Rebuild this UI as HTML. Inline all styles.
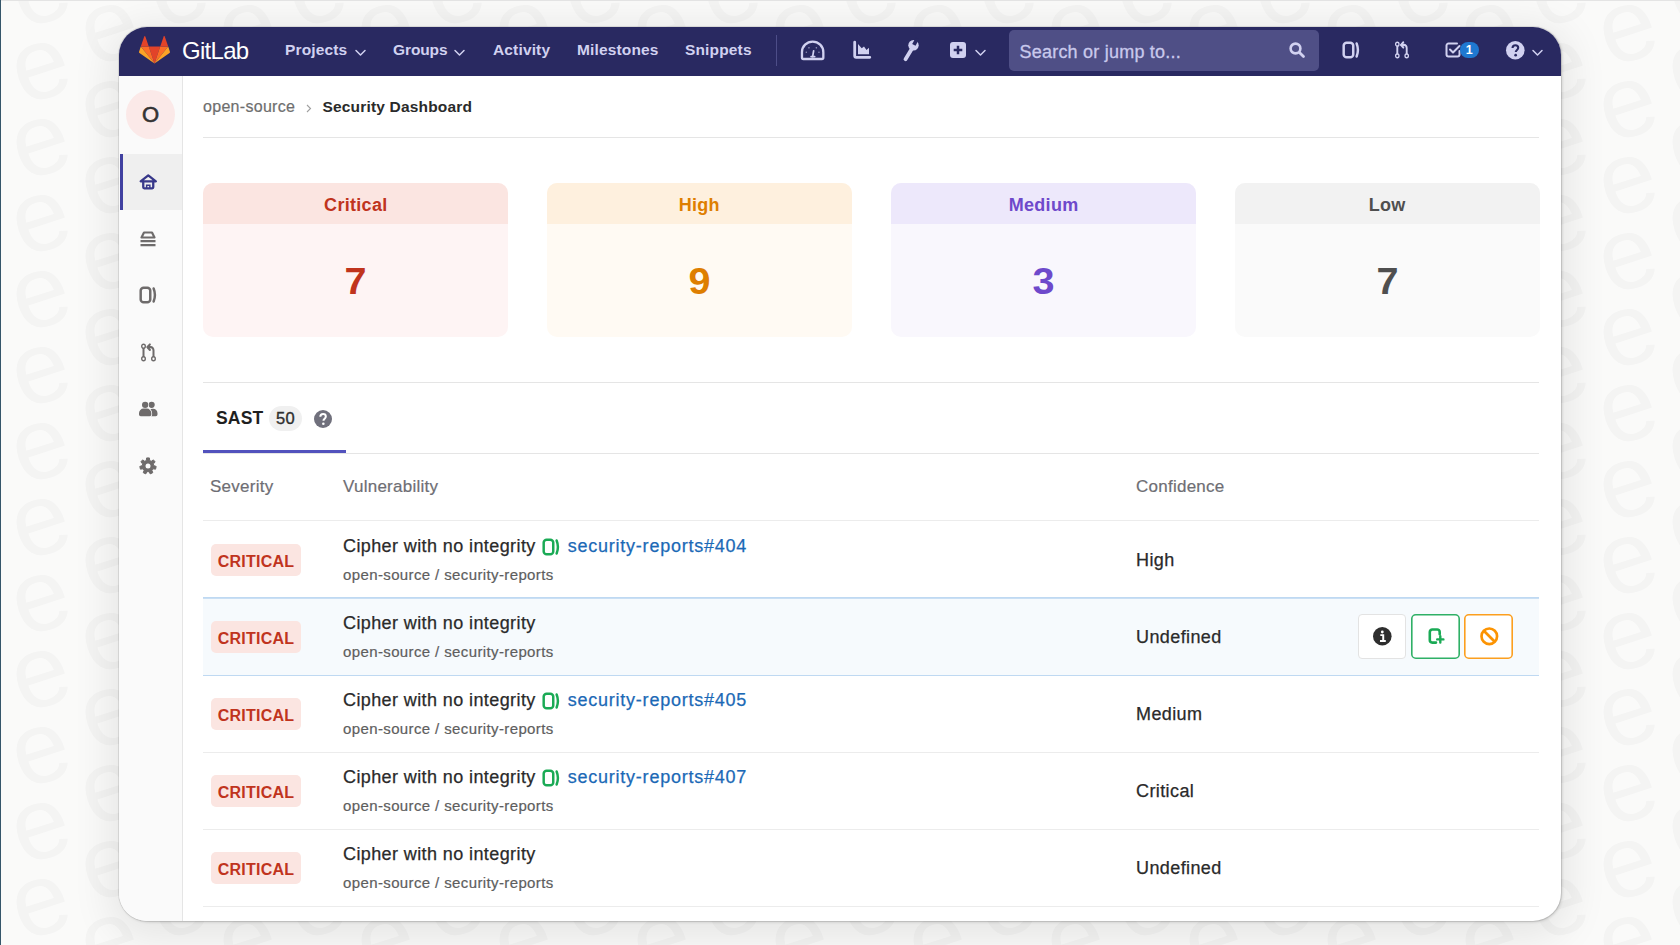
<!DOCTYPE html>
<html>
<head>
<meta charset="utf-8">
<style>
*{box-sizing:border-box;margin:0;padding:0}
html,body{width:1680px;height:945px;overflow:hidden}
body{font-family:"Liberation Sans",sans-serif;background:#fafaf9;position:relative;color:#2e2e2e}
svg{display:block;overflow:visible}
#bgpat{position:absolute;left:0;top:0;width:1680px;height:945px}
#edgeL{position:absolute;left:0;top:0;width:1px;height:945px;background:#35566a}
#edgeT{position:absolute;left:0;top:0;width:1680px;height:1px;background:#e4e4e4}
#win{position:absolute;left:119px;top:27px;width:1442px;height:894px;border-radius:28px;background:#fff;overflow:hidden;box-shadow:0 0 0 1px rgba(0,0,0,.08),1px 1px 3px rgba(0,0,0,.17),0 8px 40px 8px rgba(0,0,0,.085)}
#nav{position:absolute;left:0;top:0;width:1442px;height:49px;background:#292961}
#nav .t{position:absolute;color:#d1d1f0;font-weight:bold;font-size:15.500px;line-height:20px;top:13px;white-space:nowrap;letter-spacing:.150px}
#brand{position:absolute;left:63px;top:9px;font-size:24px;line-height:30px;color:#fff;letter-spacing:-.700px;white-space:nowrap}
#search{position:absolute;left:890px;top:3px;width:310px;height:41px;border-radius:5px;background:#4f4f86;color:#c9c9ec;font-size:18px;line-height:44px;padding-left:10.500px;white-space:nowrap;letter-spacing:.220px;-webkit-text-stroke:.300px #c9c9ec;overflow:hidden}
#tbadge{position:absolute;left:1341px;top:15px;width:18.500px;height:16px;border-radius:8px;background:#1f78d1;color:#fff;font-weight:bold;font-size:12.500px;line-height:16px;text-align:center}
#side{position:absolute;left:0;top:49px;width:64px;height:845px;background:#fafafa;border-right:1px solid #e5e5e5}
#avatar{position:absolute;left:7px;top:14px;width:49px;height:49px;border-radius:50%;background:#fbe9e8;text-align:center;font-size:22px;line-height:50px;color:#333;-webkit-text-stroke:.600px #333}
#active{position:absolute;left:1px;top:78px;width:62px;height:56px;background:#efefef;border-left:3px solid #4040a0}
#main{position:absolute;left:84px;top:49px;width:1336px;height:845px}
.hr{position:absolute;left:0;width:1336px;height:1px;background:#e5e5e5}
#bc{position:absolute;left:0;top:21px;font-size:15.500px;line-height:20px;white-space:nowrap}
#bc .g{position:absolute;left:0;top:0;color:#6e6e6e;font-size:16px;letter-spacing:.300px;-webkit-text-stroke:.200px #6e6e6e}
#bc b{position:absolute;left:119.500px;top:0;letter-spacing:.180px;color:#2a2a2a}
.card{position:absolute;top:107.200px;width:305px;height:153.400px;border-radius:10px;overflow:hidden}
.card .h{height:41px;text-align:center;font-weight:bold;font-size:18px;line-height:44px;letter-spacing:.300px}
.card .n{text-align:center;font-weight:bold;font-size:36px;line-height:40px;margin-top:38px;transform:scaleX(1.1)}
.row{position:absolute;left:0;width:1336px;height:78px;border-bottom:1px solid #ececec}
.row.hl{background:#f6fafd;border-bottom:1px solid #bfd9f2;box-shadow:0 -1px 0 #bfd9f2,inset 0 1px 0 #c9dff4}
.badge{position:absolute;left:8px;top:22.500px;width:90px;height:32px;border-radius:5px;background:#fbe5e1;color:#c0341d;font-weight:bold;font-size:16px;line-height:35px;text-align:center;letter-spacing:.200px}
.vt{position:absolute;left:140px;top:14px;font-size:18px;line-height:22px;white-space:nowrap;color:#2a2a2a;letter-spacing:.400px;-webkit-text-stroke:.250px #2a2a2a}
.vs{position:absolute;left:140px;top:45px;font-size:15px;line-height:18px;white-space:nowrap;color:#5e5e5e;letter-spacing:.380px;-webkit-text-stroke:.200px #5e5e5e}
.cf{position:absolute;left:933px;top:27.700px;font-size:18px;line-height:22px;color:#2a2a2a;white-space:nowrap;letter-spacing:.400px;-webkit-text-stroke:.250px #2a2a2a}
.lnk{color:#1b69b6;letter-spacing:.770px;-webkit-text-stroke:.250px #1b69b6}
.btn{position:absolute;top:16px;width:48px;height:45px;border:1px solid;border-radius:4px;background:#fff}
#tabu{position:absolute;left:0;top:374px;width:143px;height:3px;background:#5252bd}
#tab{position:absolute;left:13px;top:331px;font-size:17.500px;line-height:22px;color:#1f1f1f;white-space:nowrap;letter-spacing:.200px}
#cnt{position:absolute;left:66px;top:330px;width:33px;height:25px;border-radius:13px;background:#f0f0f0;font-size:16.500px;line-height:25px;text-align:center;color:#2e2e2e;letter-spacing:.300px;-webkit-text-stroke:.350px #2e2e2e}
.th{position:absolute;top:400px;font-size:17px;line-height:22px;color:#6e6e74;white-space:nowrap;letter-spacing:.250px;-webkit-text-stroke:.200px #6e6e74}
.ii{display:inline-block;vertical-align:-3.500px;margin:0 7.200px 0 6.800px}
</style>
</head>
<body>
<svg id="bgpat" width="1680" height="945"><defs><pattern id="pe" width="138" height="152" patternUnits="userSpaceOnUse" patternTransform="translate(-8 -46)"><g fill="#f4f4f3" font-family="Liberation Sans" font-size="102"><text x="21" y="68" transform="rotate(-18 50 40)">e</text><text x="21" y="144" transform="rotate(-18 50 116)">e</text><text x="90" y="106" transform="rotate(-18 119 78)">e</text><text x="-48" y="106" transform="rotate(-18 -19 78)">e</text><text x="90" y="182" transform="rotate(-18 119 154)">e</text><text x="-48" y="182" transform="rotate(-18 -19 154)">e</text><text x="90" y="30" transform="rotate(-18 119 2)">e</text><text x="-48" y="30" transform="rotate(-18 -19 2)">e</text></g></pattern></defs><rect width="1680" height="945" fill="url(#pe)"/></svg>
<div id="edgeT"></div>
<div id="edgeL"></div>
<div id="win">
  <div id="nav">
        <svg style="position:absolute;left:20px;top:8px" width="31" height="29" viewBox="0 0 36 35" preserveAspectRatio="none"><path d="M18 34.400L24.630 14H11.370z" fill="#e24329"/><path d="M18 34.400L11.370 14H2.080z" fill="#fc6d26"/><path d="M2.080 14L.07 20.200a1.370 1.370 0 0 0 .5 1.530L18 34.400z" fill="#fca326"/><path d="M2.080 14h9.290L7.380 1.710a.69.69 0 0 0-1.300 0z" fill="#e24329"/><path d="M18 34.400L24.630 14h9.290z" fill="#fc6d26"/><path d="M33.920 14l2.010 6.200a1.370 1.370 0 0 1-.5 1.530L18 34.400z" fill="#fca326"/><path d="M33.920 14h-9.290l3.990-12.290a.69.69 0 0 1 1.300 0z" fill="#e24329"/></svg>
    <div id="brand">GitLab</div>
    <div class="t" style="left:166px">Projects</div>
    <div class="t" style="left:274px;letter-spacing:-.100px">Groups</div>
    <div class="t" style="left:374px">Activity</div>
    <div class="t" style="left:458px">Milestones</div>
    <div class="t" style="left:566px">Snippets</div>
    <svg style="position:absolute;left:236px;top:21.5px" width="11" height="8" viewBox="0 0 11 8" ><path d="M1 1.500l4.500 4.500 4.500-4.500" fill="none" stroke="#d1d1f0" stroke-width="1.500" stroke-linecap="round" stroke-linejoin="round"/></svg>
    <svg style="position:absolute;left:335px;top:21.5px" width="11" height="8" viewBox="0 0 11 8" ><path d="M1 1.500l4.500 4.500 4.500-4.500" fill="none" stroke="#d1d1f0" stroke-width="1.500" stroke-linecap="round" stroke-linejoin="round"/></svg>
    <div style="position:absolute;left:657px;top:8px;width:1px;height:31px;background:#4d4d88"></div>
    <svg style="position:absolute;left:682px;top:12.7px" width="23.3" height="20.6" viewBox="0 0 24 21" ><path d="M2.500 19.500h19a1.500 1.500 0 0 0 1.500-1.500v-5.500a11 11 0 0 0-22 0V18a1.500 1.500 0 0 0 1.500 1.500z" fill="none" stroke="#d1d1f0" stroke-width="2.400"/><path d="M12 17l1-6" stroke="#d1d1f0" stroke-width="1.800" stroke-linecap="round"/><path d="M10.500 17h3.500" stroke="#d1d1f0" stroke-width="2" stroke-linecap="round"/><g fill="#d1d1f0" opacity=".600"><circle cx="5.500" cy="12.500" r=".8"/><circle cx="8.200" cy="8" r=".8"/><circle cx="15.800" cy="8" r=".8"/><circle cx="18.500" cy="12.500" r=".8"/></g></svg>
    <svg style="position:absolute;left:734px;top:14px" width="18" height="18" viewBox="0 0 18 18" ><path d="M1.700 1.200v13.600a1.500 1.500 0 0 0 1.500 1.500H16.800" fill="none" stroke="#d1d1f0" stroke-width="2.800" stroke-linecap="round"/><path d="M5 13.300V3l3.700 4.300 2.300-1.800 2.500 3.500 2.500-2.200v6.500z" fill="#d1d1f0"/></svg>
    <svg style="position:absolute;left:783px;top:12px" width="17" height="22" viewBox="0 0 17 22" ><path d="M3.500 20.200L10 9.500" stroke="#d1d1f0" stroke-width="3.800" stroke-linecap="round"/><circle cx="11.500" cy="6.200" r="5.200" fill="#d1d1f0"/><rect x="-1.900" y="-7.500" width="3.800" height="7.400" fill="#292961" transform="translate(11.800 6) rotate(29)"/></svg>
    <svg style="position:absolute;left:831px;top:15px" width="16" height="16" viewBox="0 0 16 16" ><rect x="0" y="0" width="16" height="16" rx="3" fill="#d1d1f0"/><path d="M8 3.700v8.600M3.700 8h8.600" stroke="#292961" stroke-width="2.500"/></svg>
    <svg style="position:absolute;left:856px;top:21.5px" width="11" height="8" viewBox="0 0 11 8" ><path d="M1 1.500l4.500 4.500 4.500-4.500" fill="none" stroke="#d1d1f0" stroke-width="1.500" stroke-linecap="round" stroke-linejoin="round"/></svg>
    <div id="search"><span>Search or jump to...</span></div>
    <svg style="position:absolute;left:1169.5px;top:14.8px" width="16" height="16" viewBox="0 0 16 16" ><circle cx="6.500" cy="6.500" r="4.900" fill="none" stroke="#d1d1f0" stroke-width="2.600"/><path d="M10.700 10.700l3.800 3.800" stroke="#d1d1f0" stroke-width="2.800" stroke-linecap="round"/></svg>
    <svg style="position:absolute;left:1223px;top:14px" width="18" height="18" viewBox="0 0 16 16" ><rect x="1.5" y="1.5" width="8.5" height="13" rx="2.600" fill="none" stroke="#d1d1f0" stroke-width="2.2"/><path d="M13 2.2c1.5 3.8 1.5 7.8 0 11.600" fill="none" stroke="#d1d1f0" stroke-width="2.2" stroke-linecap="round"/></svg>
    <svg style="position:absolute;left:1275px;top:14px" width="16" height="18" viewBox="0 0 16 16" preserveAspectRatio="none"><g fill="none" stroke="#d1d1f0" stroke-width="1.900" stroke-linecap="round" stroke-linejoin="round"><path d="M3.3 4.5v7"/><path d="M12.7 11.5V6.200a2.700 2.700 0 0 0-2.700-2.700H7.300"/><path d="M9.300 1.200L7 3.500l2.300 2.300"/></g><g fill="#292961" stroke="#d1d1f0" stroke-width="1.300"><circle cx="3.300" cy="2.800" r="1.700"/><circle cx="3.300" cy="13.200" r="1.700"/><circle cx="12.700" cy="13.200" r="1.700"/></g></svg>
    <svg style="position:absolute;left:1326px;top:15px" width="16" height="16" viewBox="0 0 16 16" ><path d="M12 1.500H3.500a2 2 0 0 0-2 2v9a2 2 0 0 0 2 2h9a2 2 0 0 0 2-2V9" fill="none" stroke="#d1d1f0" stroke-width="2" stroke-linecap="round"/><path d="M5 7.500l3 3 6.500-6.500" fill="none" stroke="#d1d1f0" stroke-width="2" stroke-linecap="round" stroke-linejoin="round"/></svg>
    <div id="tbadge">1</div>
    <svg style="position:absolute;left:1386.5px;top:13.7px" width="18.6" height="18.6" viewBox="0 0 16 16" ><circle cx="8" cy="8" r="8" fill="#d1d1f0"/><path d="M5.600 6.100c0-1.500 1.100-2.500 2.500-2.500s2.400.9 2.400 2.200c0 1.900-2.100 1.900-2.100 3.700" fill="none" stroke="#292961" stroke-width="1.800"/><circle cx="8.300" cy="12.200" r="1.150" fill="#292961"/></svg>
    <svg style="position:absolute;left:1413px;top:21.5px" width="11" height="8" viewBox="0 0 11 8" ><path d="M1 1.500l4.500 4.500 4.500-4.500" fill="none" stroke="#d1d1f0" stroke-width="1.500" stroke-linecap="round" stroke-linejoin="round"/></svg>
  </div>
  <div id="side">
        <div id="avatar">O</div>
    <div id="active"></div>
    <svg style="position:absolute;left:19.75px;top:97.80000000000001px" width="18.5" height="16" viewBox="0 0 18 16" ><g fill="none" stroke="#38388a" stroke-width="2.300" stroke-linejoin="round" stroke-linecap="round"><path d="M1.400 7.300L9 1.400l7.600 5.900z"/><path d="M4 8.500v4.800a1 1 0 0 0 1 1h8a1 1 0 0 0 1-1V8.500"/></g><path d="M7.400 14.300v-3h3.200v3" fill="none" stroke="#38388a" stroke-width="1.500"/></svg>
    <svg style="position:absolute;left:21.0px;top:154.85px" width="16" height="15.5" viewBox="0 0 16 15.500" ><g fill="none" stroke="#6e6b6b" stroke-width="2.200" stroke-linejoin="round"><path d="M4 1.500h8l2.500 5h-13z"/></g><path d="M.500 10.200h15M.500 14.200h15" stroke="#6e6b6b" stroke-width="2.200"/></svg>
    <svg style="position:absolute;left:19.599999999999994px;top:210.2px" width="18" height="18" viewBox="0 0 16 16" ><rect x="1.5" y="1.5" width="8.5" height="13" rx="2.600" fill="none" stroke="#6e6b6b" stroke-width="2.2"/><path d="M13 2.2c1.5 3.8 1.5 7.8 0 11.600" fill="none" stroke="#6e6b6b" stroke-width="2.2" stroke-linecap="round"/></svg>
    <svg style="position:absolute;left:20.5px;top:266.8px" width="17" height="19" viewBox="0 0 16 16" preserveAspectRatio="none"><g fill="none" stroke="#6e6b6b" stroke-width="1.900" stroke-linecap="round" stroke-linejoin="round"><path d="M3.3 4.5v7"/><path d="M12.7 11.5V6.200a2.700 2.700 0 0 0-2.700-2.700H7.300"/><path d="M9.300 1.200L7 3.500l2.300 2.300"/></g><g fill="#fafafa" stroke="#6e6b6b" stroke-width="1.300"><circle cx="3.300" cy="2.800" r="1.700"/><circle cx="3.300" cy="13.200" r="1.700"/><circle cx="12.700" cy="13.200" r="1.700"/></g></svg>
    <svg style="position:absolute;left:19.75px;top:325.0px" width="18.5" height="15.6" viewBox="0 0 18 14.500" ><g fill="#6e6b6b"><circle cx="12.300" cy="3.400" r="3"/><path d="M9 14.500v-3a4.300 4.300 0 0 1 4.300-4.300h.4A4.300 4.300 0 0 1 18 11.500v1.300a1.700 1.700 0 0 1-1.700 1.700z"/></g><g fill="#6e6b6b" stroke="#fafafa" stroke-width="1.500"><circle cx="6" cy="3.400" r="3.100"/><path d="M0 12.800v-1.300a4.500 4.500 0 0 1 4.500-4.500h3a4.500 4.500 0 0 1 4.500 4.500v1.300a1.700 1.700 0 0 1-1.700 1.700H1.700A1.700 1.700 0 0 1 0 12.800z"/></g><g fill="#6e6b6b"><circle cx="6" cy="3.400" r="3.100"/><path d="M0 12.800v-1.300a4.500 4.500 0 0 1 4.500-4.500h3a4.500 4.500 0 0 1 4.500 4.500v1.300a1.700 1.700 0 0 1-1.700 1.700H1.700A1.700 1.700 0 0 1 0 12.800z"/></g></svg>
    <svg style="position:absolute;left:20.0px;top:380.7px" width="18" height="18" viewBox="-1 -1 18 18" ><path d="M6.32 2.55 L6.61 -0.08 L9.39 -0.08 L9.68 2.55 L11.21 3.29 L13.45 1.88 L15.18 4.05 L13.31 5.92 L13.68 7.57 L16.19 8.45 L15.57 11.15 L12.93 10.85 L11.88 12.18 L12.76 14.68 L10.26 15.88 L8.85 13.64 L7.15 13.64 L5.74 15.88 L3.24 14.68 L4.12 12.18 L3.07 10.85 L0.43 11.15 L-0.19 8.45 L2.32 7.57 L2.69 5.92 L0.82 4.05 L2.55 1.88 L4.79 3.29Z" fill="#6e6b6b" stroke="#6e6b6b" stroke-width="1" stroke-linejoin="round"/><circle cx="8" cy="8" r="2.500" fill="#fafafa"/></svg>
  </div>
  <div id="main">
    <div id="bc"><span class="g">open-source</span><svg style="position:absolute;left:103px;top:6.500px" width="6" height="9" viewBox="0 0 6 9"><path d="M1 1l3.500 3.500L1 8" fill="none" stroke="#a0a0a0" stroke-width="1.100"/></svg><b>Security Dashboard</b></div>
    <div class="hr" style="top:61px"></div>

    <div class="card" style="left:.300px;background:#fef4f4"><div class="h" style="background:#fbe5e1;color:#c0341d">Critical</div><div class="n" style="color:#c0341d">7</div></div>
    <div class="card" style="left:343.800px;background:#fffaf3"><div class="h" style="background:#fef0de;color:#de7e00">High</div><div class="n" style="color:#de7e00">9</div></div>
    <div class="card" style="left:688.100px;background:#f9f7fd"><div class="h" style="background:#ede8fb;color:#6e49cb">Medium</div><div class="n" style="color:#6e49cb">3</div></div>
    <div class="card" style="left:1031.700px;background:#fafafa"><div class="h" style="background:#f2f2f2;color:#4f4f4f">Low</div><div class="n" style="color:#4f4f4f">7</div></div>

    <div class="hr" style="top:306px"></div>
    <div class="hr" style="top:377px"></div>
    <div id="tabu"></div>
    <div id="tab"><b>SAST</b></div><div id="cnt">50</div>
    <svg style="position:absolute;left:110.5px;top:334px" width="18" height="18" viewBox="0 0 16 16" ><circle cx="8" cy="8" r="8" fill="#70707c"/><path d="M5.600 6.100c0-1.500 1.100-2.500 2.500-2.500s2.400.9 2.400 2.200c0 1.900-2.100 1.900-2.100 3.700" fill="none" stroke="#fff" stroke-width="1.800"/><circle cx="8.300" cy="12.200" r="1.150" fill="#fff"/></svg>
    <div class="th" style="left:7px">Severity</div>
    <div class="th" style="left:140px">Vulnerability</div>
    <div class="th" style="left:933px">Confidence</div>
    <div class="hr" style="top:444px;background:#ececec"></div>
    <div class="row" style="top:445px"><div class="badge">CRITICAL</div><div class="vt">Cipher with no integrity<svg class="ii" viewBox="0 0 16 16" width="18" height="18"><rect x="1.5" y="1.5" width="8.5" height="13" rx="2.600" fill="none" stroke="#1aaa55" stroke-width="2.2"/><path d="M13 2.2c1.5 3.8 1.5 7.8 0 11.600" fill="none" stroke="#1aaa55" stroke-width="2.2" stroke-linecap="round"/></svg><span class="lnk">security-reports#404</span></div><div class="vs">open-source / security-reports</div><div class="cf">High</div></div>
    <div class="row hl" style="top:522px"><div class="badge">CRITICAL</div><div class="vt">Cipher with no integrity</div><div class="vs">open-source / security-reports</div><div class="cf">Undefined</div><div class="btn" style="left:1154.500px;border-color:#e3e3e3"></div><svg style="position:absolute;left:1208px;top:16px" width="49" height="45" viewBox="0 0 49 45"><rect x=".800" y=".800" width="47.400" height="43.400" rx="4" fill="#fff" stroke="#2fb066" stroke-width="1.600"/></svg><svg style="position:absolute;left:1261px;top:16px" width="49" height="45" viewBox="0 0 49 45"><rect x=".800" y=".800" width="47.400" height="43.400" rx="4" fill="#fff" stroke="#fc9f1f" stroke-width="1.600"/></svg><svg style="position:absolute;left:1169.5px;top:28.7px" width="18.6" height="18.6" viewBox="0 0 16 16" ><circle cx="8" cy="8" r="8" fill="#2e2e2e"/><path d="M6.300 7h2.500v4.800M6 12h5" fill="none" stroke="#fff" stroke-width="1.700"/><circle cx="8" cy="4.300" r="1.200" fill="#fff"/></svg><svg style="position:absolute;left:1225px;top:30px" width="16" height="16" viewBox="0 0 16 16" ><path d="M8 14.600H4.300a2.500 2.500 0 0 1-2.500-2.500V4a2.500 2.500 0 0 1 2.500-2.500h4.900A2.500 2.500 0 0 1 11.700 4v2.300" fill="none" stroke="#1aaa55" stroke-width="2.600" stroke-linecap="round"/><path d="M12.300 8.300v6.200M9.200 11.400h6.200" stroke="#1aaa55" stroke-width="2.400" stroke-linecap="round"/></svg><svg style="position:absolute;left:1277px;top:28.7px" width="18.6" height="18.6" viewBox="0 0 16 16" ><circle cx="8" cy="8" r="6.700" fill="none" stroke="#fc9403" stroke-width="2.300"/><path d="M3.500 3.500l9 9" stroke="#fc9403" stroke-width="2.300"/></svg></div>
    <div class="row" style="top:599px"><div class="badge">CRITICAL</div><div class="vt">Cipher with no integrity<svg class="ii" viewBox="0 0 16 16" width="18" height="18"><rect x="1.5" y="1.5" width="8.5" height="13" rx="2.600" fill="none" stroke="#1aaa55" stroke-width="2.2"/><path d="M13 2.2c1.5 3.8 1.5 7.8 0 11.600" fill="none" stroke="#1aaa55" stroke-width="2.2" stroke-linecap="round"/></svg><span class="lnk">security-reports#405</span></div><div class="vs">open-source / security-reports</div><div class="cf">Medium</div></div>
    <div class="row" style="top:676px"><div class="badge">CRITICAL</div><div class="vt">Cipher with no integrity<svg class="ii" viewBox="0 0 16 16" width="18" height="18"><rect x="1.5" y="1.5" width="8.5" height="13" rx="2.600" fill="none" stroke="#1aaa55" stroke-width="2.2"/><path d="M13 2.2c1.5 3.8 1.5 7.8 0 11.600" fill="none" stroke="#1aaa55" stroke-width="2.2" stroke-linecap="round"/></svg><span class="lnk">security-reports#407</span></div><div class="vs">open-source / security-reports</div><div class="cf">Critical</div></div>
    <div class="row" style="top:753px"><div class="badge">CRITICAL</div><div class="vt">Cipher with no integrity</div><div class="vs">open-source / security-reports</div><div class="cf">Undefined</div></div>
  </div>
</div>
</body>
</html>
